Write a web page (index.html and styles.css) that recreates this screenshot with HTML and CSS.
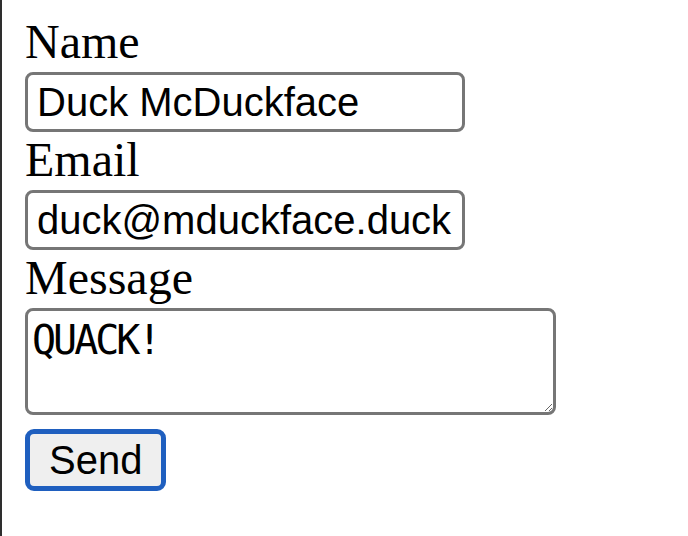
FILE: index.html
```html
<!DOCTYPE html>
<html>
<head>
    <title>Contact</title>
    <link rel="stylesheet" href="styles.css">
</head>
<body>
    <form class="contact-form">
        <label for="name">Name</label>
        <input type="text" id="name" value="Duck McDuckface">
        <label for="email">Email</label>
        <input type="email" id="email" value="duck@mduckface.duck">
        <label for="message">Message</label>
        <textarea id="message">QUACK!</textarea>
        <button type="submit">Send</button>
    </form>
</body>
</html>
```

FILE: styles.css
```css
html {
    border-left: 2px solid #2e2e2e;
    min-height: 100%;
    background: #fff;
}
body {
    margin: 0;
    padding: 15px 23px 0;
}
.contact-form {
    display: flex;
    flex-direction: column;
    align-items: flex-start;
}
.contact-form label {
    font-family: 'Liberation Serif', serif;
    font-size: 48px;
    line-height: 54px;
    color: #000;
}
.contact-form input {
    box-sizing: border-box;
    width: 440px;
    height: 60px;
    margin: 3px 0 1px;
    padding: 0 4px 0 9px;
    border: 3px solid #767676;
    border-radius: 8px;
    font-family: 'Liberation Sans', Arial, sans-serif;
    font-size: 40px;
    color: #000;
    outline: none;
}
.contact-form textarea {
    box-sizing: border-box;
    width: 531px;
    height: 107px;
    margin: 3px 0 0;
    padding: 6px 4px;
    border: 3px solid #767676;
    border-radius: 8px;
    font-family: 'DejaVu Sans Mono', monospace;
    font-size: 40px;
    letter-spacing: -3px;
    color: #000;
    outline: none;
}
.contact-form button {
    box-sizing: border-box;
    height: 62px;
    margin-top: 14px;
    padding: 0 19px;
    border: 5px solid #1f5fbf;
    border-radius: 9px;
    background: #efefef;
    font-family: 'Liberation Sans', Arial, sans-serif;
    font-size: 40px;
    color: #000;
}
```
